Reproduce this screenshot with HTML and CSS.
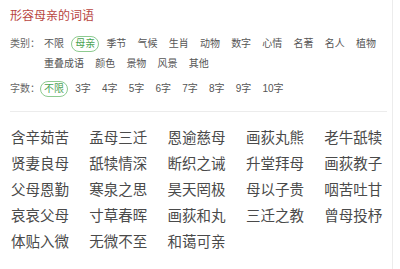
FILE: index.html
```html
<!DOCTYPE html>
<html lang="zh">
<head>
<meta charset="utf-8">
<title>形容母亲的词语</title>
<link rel="stylesheet" href="styles.css">
</head>
<body>
<div class="page">
  <div class="title">形容母亲的词语</div>
  <div class="filters">
    <div class="row">
      <span class="label">类别：</span>
      <div class="list">
        <span class="item">不限</span>
        <span class="item on">母亲</span>
        <span class="item">季节</span>
        <span class="item">气候</span>
        <span class="item">生肖</span>
        <span class="item">动物</span>
        <span class="item">数字</span>
        <span class="item">心情</span>
        <span class="item">名著</span>
        <span class="item">名人</span>
        <span class="item">植物</span>
        <span class="item">重叠成语</span>
        <span class="item">颜色</span>
        <span class="item">景物</span>
        <span class="item">风景</span>
        <span class="item">其他</span>
      </div>
    </div>
    <div class="row row-count">
      <span class="label">字数：</span>
      <div class="list">
        <span class="item on">不限</span>
        <span class="item">3字</span>
        <span class="item">4字</span>
        <span class="item">5字</span>
        <span class="item">6字</span>
        <span class="item">7字</span>
        <span class="item">8字</span>
        <span class="item">9字</span>
        <span class="item">10字</span>
      </div>
    </div>
  </div>
  <div class="sep"></div>
  <div class="words">
    <span>含辛茹苦</span><span>孟母三迁</span><span>恩逾慈母</span><span>画荻丸熊</span><span>老牛舐犊</span>
    <span>贤妻良母</span><span>舐犊情深</span><span>断织之诫</span><span>升堂拜母</span><span>画荻教子</span>
    <span>父母恩勤</span><span>寒泉之思</span><span>昊天罔极</span><span>母以子贵</span><span>咽苦吐甘</span>
    <span>哀哀父母</span><span>寸草春晖</span><span>画荻和丸</span><span>三迁之教</span><span>曾母投杼</span>
    <span>体贴入微</span><span>无微不至</span><span>和蔼可亲</span>
  </div>
</div>
</body>
</html>
```

FILE: styles.css
```css
html, body {
  margin: 0;
  padding: 0;
  background: #fff;
}
body {
  font-family: "Liberation Sans", "Noto Sans CJK SC", sans-serif;
}
.page {
  width: 393px;
  height: 269px;
  box-sizing: border-box;
  border-right: 1px solid #ececec;
}
.title {
  padding: 8px 0 0 10px;
  font-size: 12px;
  line-height: 16px;
  color: #b8453f;
}
.filters {
  padding-left: 10px;
  margin-top: 12px;
}
.row {
  display: flex;
  font-size: 10px;
  color: #555;
}
.row-count {
  margin-top: 9px;
}
.label {
  flex: 0 0 30px;
  line-height: 16px;
  color: #666;
}
.list {
  display: flex;
  flex-wrap: wrap;
  column-gap: 3.2px;
  row-gap: 4px;
  width: 345px;
}
.item {
  display: inline-block;
  padding: 0 3px;
  line-height: 14px;
  border: 1px solid transparent;
  border-radius: 8px;
  white-space: nowrap;
}
.item.on {
  border-color: #8dcb90;
  color: #4aa352;
}
.sep {
  height: 1px;
  background: #ececec;
  margin: 14px 5px 0 10px;
}
.words {
  display: grid;
  grid-template-columns: repeat(5, 78.3px);
  padding-left: 11px;
  margin-top: 13px;
  font-size: 14.5px;
  line-height: 26px;
  color: #4a4a4a;
}
.words span {
  white-space: nowrap;
}
```
